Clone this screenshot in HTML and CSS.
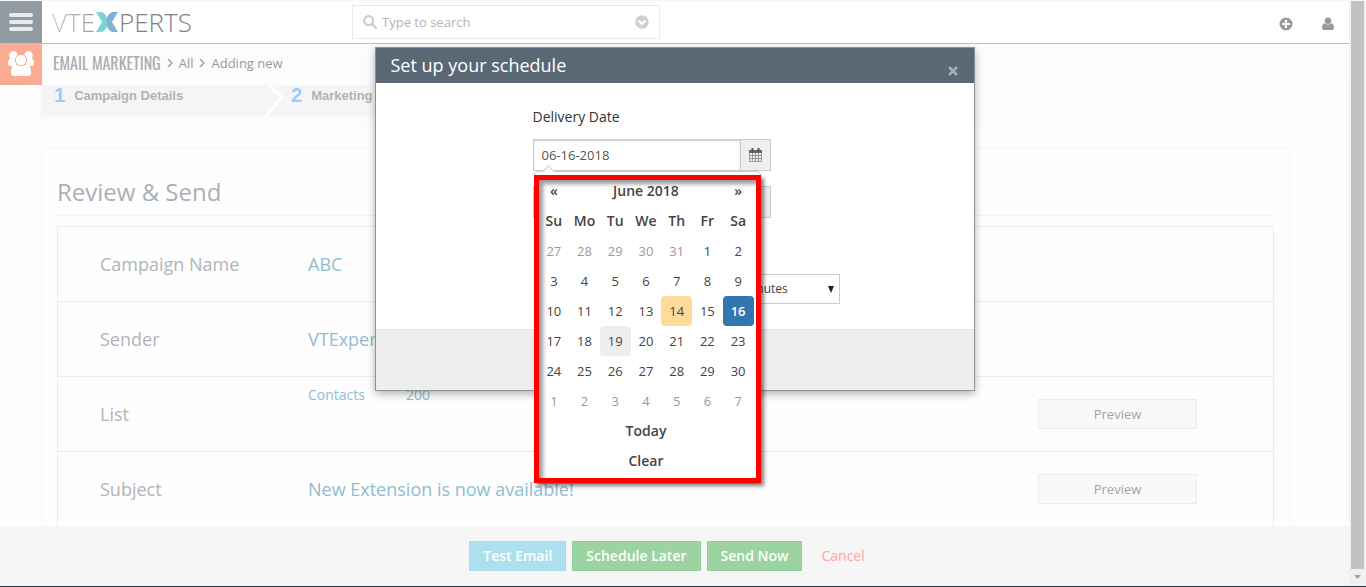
FILE: index.html
```html
<!DOCTYPE html>
<html lang="en">
<head>
<meta charset="utf-8">
<title>Email Marketing</title>
<link rel="stylesheet" href="styles.css">
</head>
<body>
<div class="shell">
  <div class="app">
    <header class="topbar">
      <button class="menu-btn" aria-label="Menu"><svg width="24" height="20" viewBox="0 0 24 20"><path d="M2 3h20M2 10h20M2 17h20" stroke="#e8eaec" stroke-width="4" stroke-linecap="round"/></svg></button>
      <a class="logo" href="#"><span class="logo-left">VTE</span><svg width="22" height="20" viewBox="0 0 22 20"><path d="M0 0h6q4 2 5 6v8q-1 4-5 6H0l6-10z" fill="#7dd3d0"/><path d="M22 0h-6q-4 2-5 6v8q1 4 5 6h6l-6-10z" fill="#7fb2d5"/></svg><span class="logo-right">PERTS</span></a>
      <div class="search">
        <svg width="14" height="14" viewBox="0 0 14 14"><circle cx="5.7" cy="5.7" r="4.5" fill="none" stroke="#ccc" stroke-width="2.2"/><path d="M9 9l4 4" stroke="#ccc" stroke-width="2.4" stroke-linecap="round"/></svg>
        <input type="text" placeholder="Type to search" aria-label="Type to search">
        <svg width="14" height="14" viewBox="0 0 14 14"><circle cx="7" cy="7" r="6.8" fill="#d0d0d0"/><path d="M3.500 5.500L7 9l3.500-3.500" fill="none" stroke="#fff" stroke-width="2.200"/></svg>
      </div>
      <div class="top-icons">
        <button aria-label="Add"><svg width="14" height="14" viewBox="0 0 14 14"><circle cx="7" cy="7" r="6.500" fill="#999"/><path d="M7 3v8M3 7h8" stroke="#fff" stroke-width="2.200"/></svg></button>
        <button aria-label="Account"><svg width="12" height="14" viewBox="0 0 12 14"><circle cx="6" cy="3.800" r="3.200" fill="#999"/><path d="M2.500 6.200Q6 9 9.500 6.200Q12 7 12 11q0 2-2 2H2q-2 0-2-2Q0 7 2.500 6.200z" fill="#999"/></svg></button>
      </div>
    </header>
    <nav class="crumbs">
      <span class="module-icon"><svg width="26" height="26" viewBox="0 0 26 26" fill="#fff"><circle cx="5.500" cy="4.500" r="4.300"/><circle cx="20.500" cy="4.500" r="4.300"/><path d="M1 8h7v7H2q-2 0-2-3zM18 8h7l1 4q0 3-2 3h-6z"/><path d="M3 22q0-8 4-8h12q4 0 4 8 0 3-4 3H7q-4 0-4-3z"/><circle cx="13" cy="9" r="5.700" stroke="#f9ac92"/></svg></span>
      <a class="module" href="#">EMAIL MARKETING</a>
      <svg width="6" height="8" viewBox="0 0 6 8"><path d="M1 0l4 4-4 4" fill="none" stroke="#999" stroke-width="1.300"/></svg>
      <a href="#">All</a>
      <svg width="6" height="8" viewBox="0 0 6 8"><path d="M1 0l4 4-4 4" fill="none" stroke="#999" stroke-width="1.300"/></svg>
      <span>Adding new</span>
    </nav>
    <div class="steps-wrap">
      <ol class="steps">
        <li><b>1</b><span>Campaign Details</span></li>
        <li><svg class="chev" width="25" height="31" viewBox="0 0 25 31"><path d="M2-4l18 16L2 33" fill="none" stroke="#fff" stroke-width="3"/></svg><b>2</b><span>Marketing</span></li>
      </ol>
    </div>
    <main class="card">
      <h1>Review &amp; Send</h1>
      <dl class="review">
        <div class="row"><dt>Campaign Name</dt><dd>ABC</dd></div>
        <div class="row"><dt>Sender</dt><dd>VTExperts</dd></div>
        <div class="row"><dt>List</dt><dd class="list"><span>Contacts</span><span>200</span></dd><dd class="act"><button>Preview</button></dd></div>
        <div class="row"><dt>Subject</dt><dd>New Extension is now available!</dd><dd class="act"><button>Preview</button></dd></div>
      </dl>
    </main>
    <footer class="actions">
      <button class="info">Test Email</button>
      <button class="go">Schedule Later</button>
      <button class="go">Send Now</button>
      <a href="#">Cancel</a>
    </footer>
    <div class="overlay">
      <section class="modal" role="dialog" aria-labelledby="dlg">
        <header><h2 id="dlg">Set up your schedule</h2><button aria-label="Close"><svg width="10" height="10" viewBox="0 0 10 10"><path d="M1 1l8 8M9 1l-8 8" stroke="#a3adb5" stroke-width="2.600"/></svg></button></header>
        <div class="modal-body">
          <label for="date">Delivery Date</label>
          <div class="group"><input id="date" type="text" value="06-16-2018"><button aria-label="Open calendar"><svg width="13" height="14" viewBox="0 0 13 14"><path d="M.5 3.500h12v10H.5zM.5 7.500h12M.5 10.500h12M3.500 5v8M6.500 5v8M9.500 5v8" fill="none" stroke="#777" stroke-width=".7"/><path d="M0 2h13v3H0z" fill="#666"/><path d="M3.500 0v4M9.500 0v4" stroke="#555" stroke-width="2"/></svg></button>
            <div class="calendar">
              <table>
                <thead>
                  <tr><th>«</th><th colspan="5">June 2018</th><th>»</th></tr>
                  <tr><th>Su</th><th>Mo</th><th>Tu</th><th>We</th><th>Th</th><th>Fr</th><th>Sa</th></tr>
                </thead>
                <tbody>
                  <tr><td class="off">27</td><td class="off">28</td><td class="off">29</td><td class="off">30</td><td class="off">31</td><td>1</td><td>2</td></tr>
                  <tr><td>3</td><td>4</td><td>5</td><td>6</td><td>7</td><td>8</td><td>9</td></tr>
                  <tr><td>10</td><td>11</td><td>12</td><td>13</td><td class="today">14</td><td>15</td><td class="picked">16</td></tr>
                  <tr><td>17</td><td>18</td><td class="hover">19</td><td>20</td><td>21</td><td>22</td><td>23</td></tr>
                  <tr><td>24</td><td>25</td><td>26</td><td>27</td><td>28</td><td>29</td><td>30</td></tr>
                  <tr><td class="off">1</td><td class="off">2</td><td class="off">3</td><td class="off">4</td><td class="off">5</td><td class="off">6</td><td class="off">7</td></tr>
                </tbody>
                <tfoot><tr><th colspan="7">Today</th></tr><tr><th colspan="7">Clear</th></tr></tfoot>
              </table>
              <div class="highlight"></div>
            </div>
          </div>
          <div class="group"><input type="text" aria-label="Delivery time"><button aria-label="Open time picker"></button></div>
          <div class="unit"><select aria-label="Unit"><option>Minutes</option></select><svg width="6" height="7" viewBox="0 0 6 7"><path d="M0 0h6L3 7z" fill="#222"/></svg></div>
        </div>
        <footer></footer>
      </section>
    </div>
  </div>
  <div class="scrollbar"><div class="thumb"></div><svg width="17" height="17" viewBox="0 0 17 17"><path d="M5 6h7l-3.500 4z" fill="#a3a3a3"/></svg></div>
</div>
</body>
</html>
```
FILE: styles.css
```css
* { box-sizing: border-box; }
body { margin: 0; font: 13px/20px "Open Sans", sans-serif; color: #999; background: #fefefe; }
h1, h2, dl, dd, ol { margin: 0; padding: 0; font-weight: 400; }
button, input, select { font: inherit; color: inherit; margin: 0; }
button { padding: 0; border: 0; background: none; }
a { color: inherit; text-decoration: none; }
svg { display: block; flex: none; }

.shell { display: flex; height: 100vh; border-top: 1px solid #f7f7f7; border-bottom: 1px solid #2a3438; overflow: hidden; }
.app { position: relative; flex: 1; min-width: 0; display: flex; flex-direction: column; }

.topbar { flex: none; display: flex; height: 43px; background: #fff; border-bottom: 1px solid #f4ab8e; }
.menu-btn { width: 42px; height: 42px; background: #939ba2; display: grid; place-items: center; }
.logo { display: flex; align-items: center; gap: 1px; width: 310px; padding-left: 10px; font-size: 26px; font-weight: 300; line-height: 42px; }
.logo-left { color: transparent; background: linear-gradient(90deg, #c8c8c8, #999); background-clip: text; -webkit-background-clip: text; }
.logo-right { color: #808080; }
.search { display: flex; align-items: center; gap: 5px; width: 308px; height: 34px; margin-top: 4px; padding: 0 10px; border: 1px solid #eaeaea; background: #fff; }
.search input { flex: 1; min-width: 0; padding: 0; border: 0; outline: 0; background: none; }
.search input::placeholder { color: #b5b5b5; opacity: 1; }
.top-icons { display: flex; align-items: center; gap: 29px; margin-left: auto; padding: 4px 15px 0 0; }

.crumbs { flex: none; display: flex; align-items: center; gap: 6px; height: 41px; padding-bottom: 4px; background: #fcfcfc; }
.module-icon { width: 42px; height: 42px; margin: 0 5px -4px 0; align-self: flex-end; background: #f9ac92; display: grid; place-items: center; }
.module { font-family: Oswald, "Roboto Condensed", Roboto, sans-serif; font-size: 16px; font-weight: 400; color: #a9adb2; }

.steps-wrap { flex: none; height: 44px; margin: 0 44px 0 26px; padding-left: 15px; background: #fcfcfc; }
.steps { display: flex; width: 60%; height: 31px; background: #f5f5f5; list-style: none; font: bold 13px/21px "Liberation Sans", Arial, sans-serif; color: #b2b2b2; }
.steps li { display: flex; gap: 9px; padding-left: 13px; }
.steps li:first-child { width: 221px; }
.steps li:last-child { padding-left: 0; }
.steps b { color: #99ccff; font-size: 20px; }
.chev { margin-right: -5px; }

.card { flex: 1; min-height: 0; overflow: hidden; margin: 18px 59px 0 41px; padding: 28px 15px 0; border: 1px solid #f7f7f7; border-bottom: 0; }
.card h1 { height: 40px; font-size: 24px; line-height: 32px; color: #aaafb6; border-bottom: 1px solid #f3f3f3; margin-bottom: 10px; }
.review { border: 1px solid #ebebeb; }
.row { display: flex; align-items: center; height: 75px; padding-left: 42px; border-bottom: 1px solid #ebebeb; font-size: 18px; }
.row dt { width: 208px; color: #b0b4b8; }
.row dd { color: #8fbdd1; }
.row .list { display: flex; gap: 41px; align-self: flex-start; padding-top: 8px; font-size: 14px; }
.row .act { margin-left: auto; padding-right: 76px; }
.act button { display: block; width: 159px; height: 30px; border: 1px solid #ebebeb; background: #f9f9f9; color: #a3a3a3; font-size: 13px; }

.actions { flex: none; display: flex; align-items: center; justify-content: center; gap: 6px; height: 60px; padding-right: 15px; background: #f6f6f6; font-size: 14px; }
.actions button { height: 30px; padding: 0 13px; border: 1px solid; color: #fff; font-weight: 600; }
.actions .info { background: #addfee; border-color: #a5dcec; }
.actions .go { background: #9bd3a1; border-color: #94cf9b; }
.actions a { margin-left: 13px; color: #ffa3a3; }

.overlay { position: absolute; inset: 46px 0 auto; display: flex; justify-content: center; }
.modal { width: 600px; background: #fff; border: 1px solid #8f9294; box-shadow: 0 3px 8px rgba(0,0,0,.3); color: #333; }
.modal > header { display: flex; justify-content: space-between; height: 35px; padding: 0 16px 0 15px; background: #596874; }
.modal h2 { font-size: 18px; line-height: 35px; color: #fff; }
.modal > header button { padding-top: 10px; }
.modal-body { height: 246px; padding: 24px 134px 0 157px; font-size: 14px; }
.modal-body label { display: block; margin-bottom: 12px; line-height: 20px; }
.modal > footer { height: 61px; background: #eee; border-top: 1px solid #e3e3e3; }
.group { position: relative; display: flex; width: 238px; height: 32px; margin-bottom: 15px; }
.group input { flex: 1; min-width: 0; padding: 0 8px; border: 1px solid #ccc; box-shadow: inset 0 1px 2px #ccc; font-size: 13px; color: #555; outline: 0; }
.group button { width: 30px; display: grid; place-items: center; background: #eee; border: 1px solid #ccc; border-left: 0; }
.unit { display: flex; align-items: center; justify-content: flex-end; padding-top: 41px; }
.unit select { appearance: none; width: 120px; height: 30px; padding: 0 22px; border: 1px solid #ccc; border-radius: 0; font-size: 12px; color: #444; background: #fff; }
.unit svg { margin: 0 6px 0 -12px; pointer-events: none; }

.calendar { position: absolute; z-index: 2; top: 32px; left: 1px; width: 227px; height: 313px; padding: 4px 6px 5px 4px; background: #fff; border: 1px solid #ccc; border-radius: 4px; }
.calendar::before { content: ""; position: absolute; top: -5px; left: 9px; width: 8px; height: 8px; background: #fff; border: solid #ccc; border-width: 1px 0 0 1px; rotate: 45deg; }
.highlight { position: absolute; inset: 3px -1px 0; border: 5px solid #f00; box-shadow: 3px 3px 4px rgba(0,0,0,.5), inset 4px 4px 4px rgba(0,0,0,.4); }
.calendar table { border-collapse: collapse; table-layout: fixed; width: 100%; font-size: 13px; text-align: center; color: #444; }
.calendar th, .calendar td { height: 30px; padding: 0; border-radius: 4px; }
.calendar th { font-size: 14px; font-weight: 600; }
.calendar .off { color: #999; }
.calendar .today { background: #ffdb99; }
.calendar .picked { background: #3276b1; color: #fff; font-weight: 600; }
.calendar .hover { background: #eee; }

.scrollbar { display: flex; flex-direction: column; width: 17px; background: #f1f1f1; }
.thumb { flex: 1; margin: 0 2px; background: #c1c1c1; }
```
